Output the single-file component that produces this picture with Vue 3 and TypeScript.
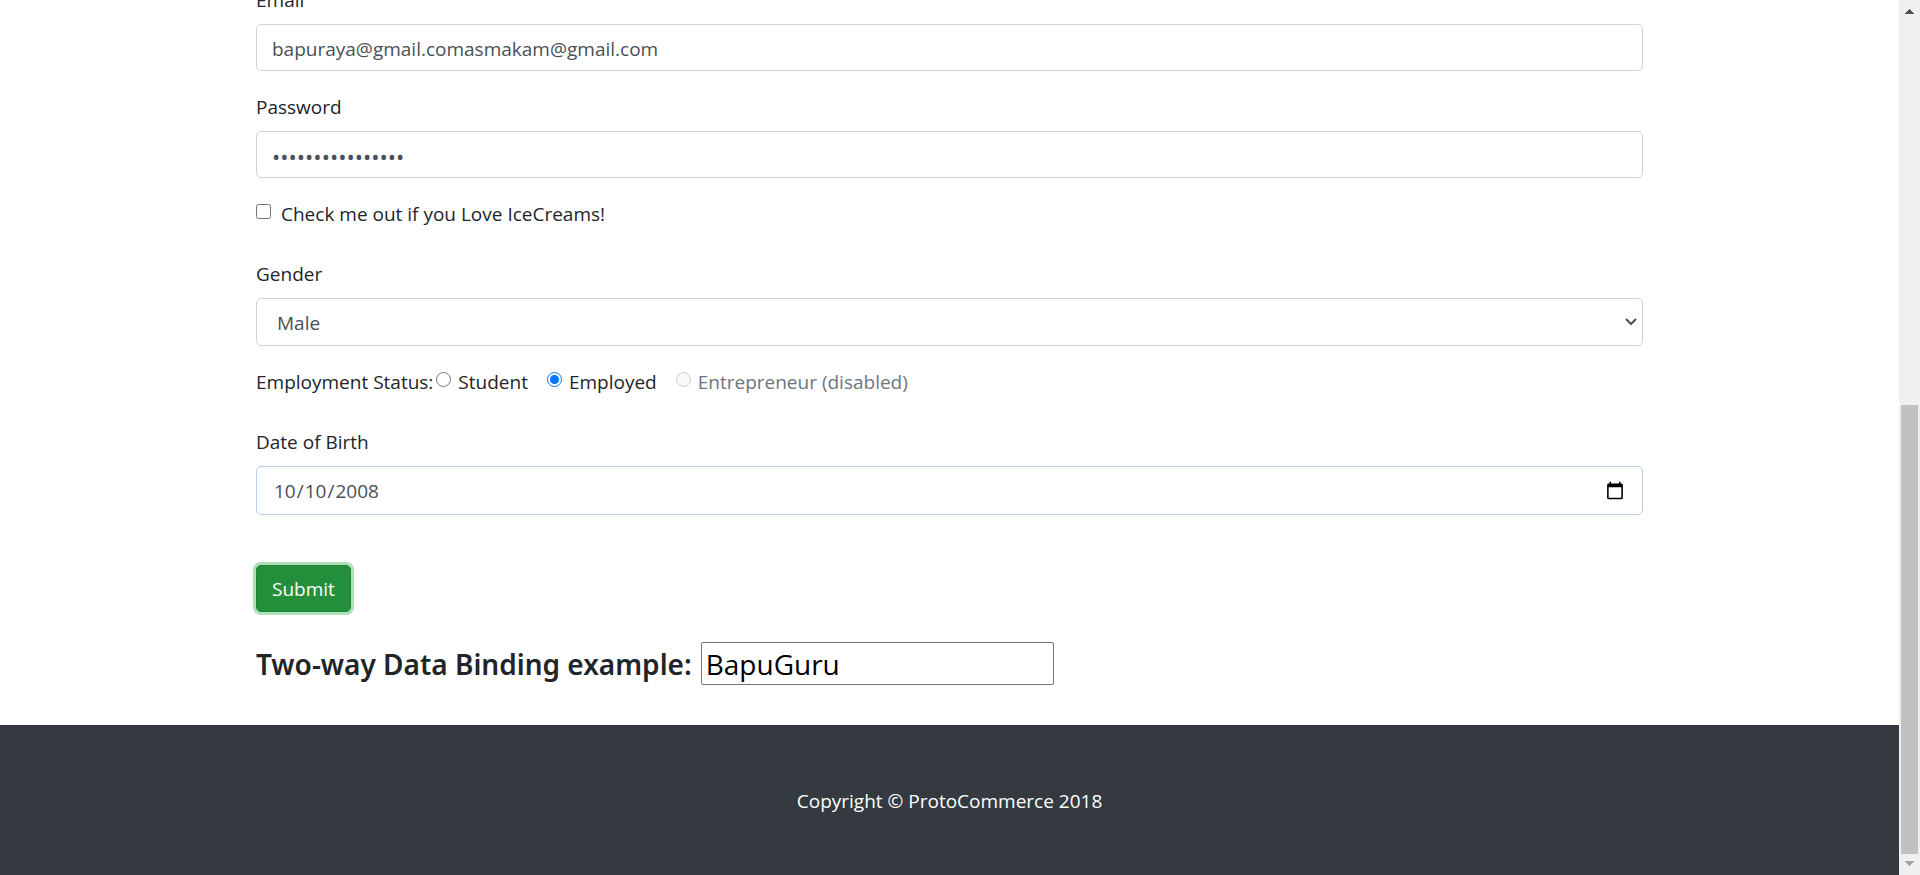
<script setup lang="ts">
import { ref } from 'vue'

const email = ref<string>('bapuraya@gmail.comasmakam@gmail.com')
const password = ref<string>('passwordpassword')
const likesIceCream = ref<boolean>(false)
const gender = ref<string>('Male')
const status = ref<string>('employed')
const birthDate = ref<string>('2008-10-10')
const boundName = ref<string>('BapuGuru')

const statuses = [
  { value: 'student', label: 'Student', disabled: false },
  { value: 'employed', label: 'Employed', disabled: false },
  { value: 'entrepreneur', label: 'Entrepreneur (disabled)', disabled: true },
]
</script>

<template>
  <div class="window">
    <div class="page">
      <main class="container">
        <form @submit.prevent>
          <div class="group">
            <label class="caption" for="email">Email</label>
            <input id="email" v-model="email" class="control" type="text" />
          </div>
          <div class="group">
            <label class="caption" for="password">Password</label>
            <input id="password" v-model="password" class="control secret" type="password" autocomplete="off" />
          </div>
          <div class="check">
            <input id="ice" v-model="likesIceCream" class="tick" type="checkbox" />
            <label for="ice">Check me out if you Love IceCreams!</label>
          </div>
          <div class="group">
            <label class="caption" for="gender">Gender</label>
            <select id="gender" v-model="gender" class="control select">
              <option>Male</option>
              <option>Female</option>
            </select>
          </div>
          <div class="statuses" role="radiogroup" aria-labelledby="status-title">
            <span id="status-title">Employment Status:</span>
            <span v-for="s in statuses" :key="s.value" class="option" :class="{ off: s.disabled }">
              <input :id="s.value" v-model="status" class="tick round" type="radio" name="status" :value="s.value" :disabled="s.disabled" />
              <label :for="s.value">{{ s.label }}</label>
            </span>
          </div>
          <div class="group">
            <label class="caption" for="dob">Date of Birth</label>
            <input id="dob" v-model="birthDate" class="control date" type="date" />
          </div>
          <button class="submit" type="submit">Submit</button>
        </form>
        <h4 class="binding">
          <label for="bound">Two-way Data Binding example:</label>
          <input id="bound" v-model="boundName" class="bound" type="text" />
        </h4>
      </main>
      <footer class="footer">
        <p>Copyright © ProtoCommerce 2018</p>
      </footer>
    </div>
    <div class="scrollbar" aria-hidden="true">
      <svg class="arrow" viewBox="0 0 21 21" shape-rendering="crispEdges">
        <path fill="#505050" d="M10 9h1v1h1v1h1v1h1v1h1v1H6v-1h1v-1h1v-1h1v-1h1z" />
      </svg>
      <div class="before"></div>
      <div class="thumb"></div>
      <svg class="arrow" viewBox="0 0 21 21" shape-rendering="crispEdges">
        <path fill="#a3a3a3" d="M6 7h9v1h-1v1h-1v1h-1v1h-1v1h-1v-1H9v-1H8V9H7V8H6z" />
      </svg>
    </div>
  </div>
</template>

<style>
body {
  margin: 0;
  background: #fff;
}
</style>

<style scoped>
* {
  box-sizing: border-box;
}

.window {
  display: flex;
  height: 100vh;
  overflow: hidden;
  color: #212529;
  font-family: 'Open Sans', 'Noto Sans', sans-serif;
  font-size: 19px;
  line-height: 30px;
}

/* The page is scrolled to its end, so the footer rests on the bottom edge. */
.page {
  display: flex;
  flex: 1;
  flex-direction: column;
  justify-content: flex-end;
  min-width: 0;
}

.container {
  flex: none;
  width: 100%;
  max-width: 1425px;
  margin: 0 auto;
  padding: 0 19px 40px;
}

.group {
  margin-bottom: 20px;
}

.caption {
  display: block;
  margin-bottom: 9px;
  padding-top: 1px;
}

.control {
  display: block;
  width: 100%;
  height: 47px;
  padding: 9px 15px 7px;
  border: 1px solid #ced4da;
  border-radius: 5px;
  background: #fff;
  color: #495057;
  font: inherit;
  outline: none;
}

.secret {
  font-size: 22px;
}

.select {
  height: 48px;
  padding: 9px 20px 7px;
  appearance: none;
  background: #fff url("data:image/svg+xml,%3Csvg xmlns='http://www.w3.org/2000/svg' width='12' height='8' viewBox='0 0 12 8'%3E%3Cpath d='M1 1l5 5 5-5' fill='none' stroke='%23495057' stroke-width='2'/%3E%3C/svg%3E") no-repeat right 5px center;
}

.date {
  height: 49px;
  padding: 8px 15px 8px 16px;
  border-color: #b8d0e8;
}

.date::-webkit-calendar-picker-indicator {
  width: 20px;
  height: 20px;
}

.check {
  display: flex;
  gap: 10px;
  margin-bottom: 30px;
}

.check label,
.statuses label,
#status-title {
  padding-top: 1px;
  margin-bottom: -1px;
}

.tick {
  flex: none;
  width: 15px;
  height: 15px;
  margin: 6px 0 0;
}

.round {
  accent-color: #0075ff;
}

.statuses {
  display: flex;
  margin-bottom: 30px;
}

.option {
  display: flex;
  gap: 7px;
  margin-left: 3px;
}

.option + .option {
  margin-left: 19px;
}

.off {
  color: #6c757d;
}

.submit {
  display: block;
  height: 47px;
  margin-top: 50px;
  padding: 1px 15px 0;
  border: 1px solid #1f8336;
  border-radius: 5px;
  background: #238f3b;
  box-shadow: 0 0 0 3px #addfb8;
  color: #fff;
  font: inherit;
}

.binding {
  display: flex;
  align-items: center;
  gap: 9px;
  margin: 30px 0 0;
  font-family: 'Noto Sans', 'Open Sans', sans-serif;
  font-size: 28px;
  font-weight: 600;
  line-height: 36px;
}

.bound {
  width: 353px;
  height: 43px;
  padding: 1px 4px 0;
  border: 1px solid #767676;
  border-radius: 2px;
  background: #fff;
  color: #000;
  font: inherit;
  font-family: 'Open Sans', 'Noto Sans', sans-serif;
  font-weight: 400;
  outline: none;
}

.footer {
  flex: none;
  padding: 61px 19px 59px;
  background: #343a40;
  color: #fff;
  text-align: center;
}

.footer p {
  margin: 0;
}

.scrollbar {
  display: flex;
  flex: none;
  flex-direction: column;
  width: 21px;
  background: #f0f0f0;
}

.arrow {
  flex: none;
  width: 21px;
  height: 21px;
}

.before {
  flex: 384;
}

.thumb {
  flex: 449;
  margin: 0 2px;
  background: #c1c1c1;
}
</style>
